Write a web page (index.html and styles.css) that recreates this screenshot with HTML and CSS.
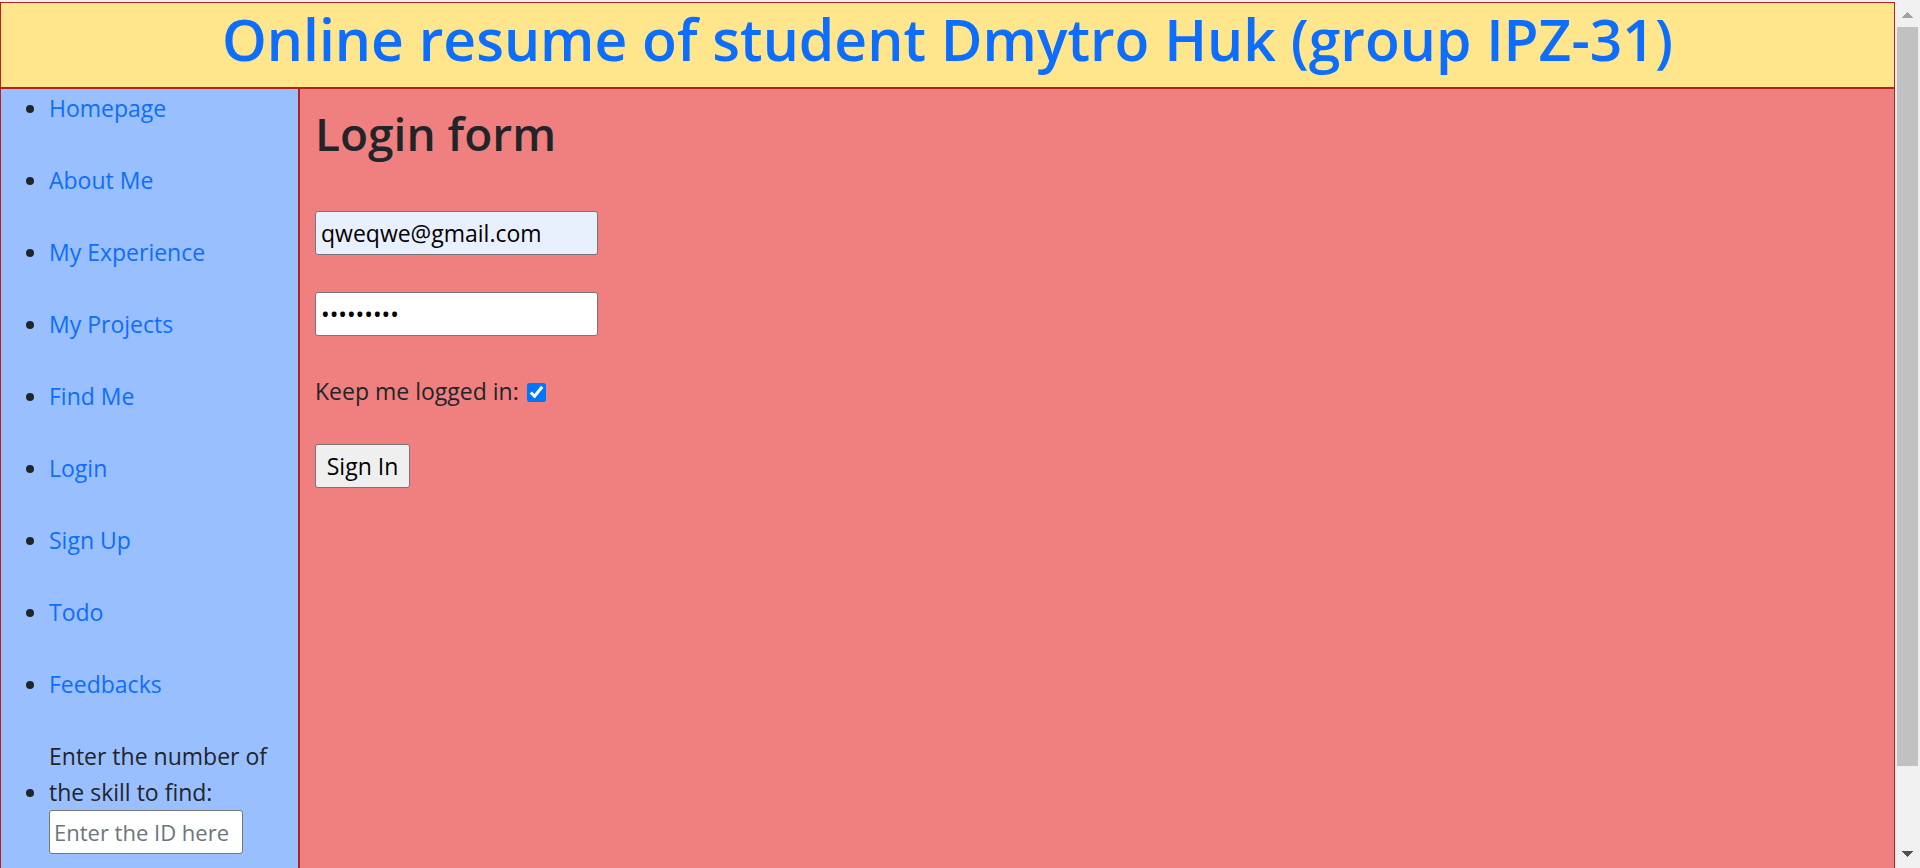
FILE: index.html
```html
<!DOCTYPE html>
<html lang="en">
<head>
<meta charset="utf-8">
<title>Online resume of student Dmytro Huk</title>
<link rel="stylesheet" href="styles.css">
</head>
<body>
<div class="page">
  <header class="site-header">
    <h1 class="site-title">Online resume of student Dmytro Huk (group IPZ-31)</h1>
  </header>
  <div class="layout">
    <nav class="sidebar">
      <ul class="nav-list">
        <li class="nav-item"><a class="nav-link" href="#">Homepage</a></li>
        <li class="nav-item"><a class="nav-link" href="#">About Me</a></li>
        <li class="nav-item"><a class="nav-link" href="#">My Experience</a></li>
        <li class="nav-item"><a class="nav-link" href="#">My Projects</a></li>
        <li class="nav-item"><a class="nav-link" href="#">Find Me</a></li>
        <li class="nav-item"><a class="nav-link" href="#">Login</a></li>
        <li class="nav-item"><a class="nav-link" href="#">Sign Up</a></li>
        <li class="nav-item"><a class="nav-link" href="#">Todo</a></li>
        <li class="nav-item"><a class="nav-link" href="#">Feedbacks</a></li>
        <li class="nav-item"><label class="search-label" for="skill">Enter the number of the skill to find:</label><input id="skill" class="search-input" type="text" placeholder="Enter the ID here"></li>
      </ul>
    </nav>
    <main class="content">
      <h2 class="form-title">Login form</h2>
      <form class="login-form">
        <input class="field field-filled" type="email" value="qweqwe@gmail.com">
        <input class="field" type="password" value="123456789">
        <label class="remember">Keep me logged in:<input class="remember-box" type="checkbox" checked></label>
        <button class="btn" type="button">Sign In</button>
      </form>
    </main>
  </div>
</div>
<div class="scrollbar" aria-hidden="true">
  <div class="sb-btn sb-up"></div>
  <div class="sb-track"><div class="sb-thumb"></div></div>
  <div class="sb-btn sb-down"></div>
</div>
</body>
</html>
```

FILE: styles.css
```css
html {
  background: #f0f0f0;
}

body {
  margin: 0;
  font-family: "Open Sans", "Noto Sans", "Liberation Sans", sans-serif;
  font-size: 23px;
  line-height: 36px;
  color: #212529;
}

.page {
  padding-top: 2px;
  margin-right: 25px;
}

.site-header {
  background: #ffe68c;
  border: 1px solid #b22222;
  border-bottom-width: 2px;
}

.site-title {
  margin: 0 0 12px;
  text-align: center;
  font-size: 57px;
  line-height: 72px;
  font-weight: 600;
  color: #0d6efd;
}

.layout {
  display: flex;
  min-height: 873px;
}

.sidebar {
  width: 297px;
  flex: none;
  background: #99bfff;
  border-left: 1px solid #b22222;
  border-right: 2px solid #b22222;
}

.nav-list {
  margin: 0;
  padding: 1px 0 0 48px;
}

.nav-item {
  margin-bottom: 36px;
}

.nav-link {
  color: #0d6efd;
  text-decoration: none;
}

.search-label {
  display: inline-block;
}

.search-input {
  display: block;
  box-sizing: border-box;
  width: 194px;
  height: 44px;
  margin: 0;
  padding: 0 4px;
  font: inherit;
  font-size: 22px;
  color: #212529;
  background: #fff;
  border: 1px solid #767676;
  border-radius: 3px;
}

.search-input::placeholder {
  color: #6c757d;
}

.content {
  flex: 1;
  background: #f08080;
  border-right: 1px solid #b22222;
  padding: 15px 15px 0;
}

.form-title {
  margin: 0 0 49px;
  font-size: 46px;
  line-height: 58px;
  font-weight: 600;
  color: #212529;
}

.login-form {
  display: flex;
  flex-direction: column;
  align-items: flex-start;
}

.field {
  box-sizing: border-box;
  width: 283px;
  height: 44px;
  margin: 0 0 37px;
  padding: 0 5px;
  font: inherit;
  color: #000;
  background: #fff;
  border: 1px solid #767676;
  border-radius: 3px;
}

.field-filled {
  background: #e8f0fe;
}

.remember {
  display: block;
  margin-bottom: 35px;
}

.remember-box {
  width: 19px;
  height: 19px;
  margin: 0 0 0 8px;
  vertical-align: -2px;
}

.btn {
  box-sizing: border-box;
  width: 95px;
  height: 44px;
  padding: 0;
  font: inherit;
  color: #000;
  background: #efefef;
  border: 1px solid #767676;
  border-radius: 3px;
}

/* window scrollbar, drawn over the right edge of the viewport */
.scrollbar {
  position: fixed;
  top: 0;
  right: 0;
  width: 25px;
  height: 100vh;
  display: flex;
  flex-direction: column;
  background: #f0f0f0;
}

.sb-btn {
  height: 27px;
  flex: none;
  background-repeat: no-repeat;
  background-size: 11px 6px;
}

.sb-up {
  background-image: conic-gradient(from 137.5deg at 50% 0, #a3a3a3 85deg, transparent 0);
  background-position: 7px 12px;
}

.sb-down {
  background-image: conic-gradient(from -42.5deg at 50% 100%, #505050 85deg, transparent 0);
  background-position: 7px 10px;
}

.sb-track {
  flex: 1;
  padding: 0 2px;
}

.sb-thumb {
  height: 739px;
  background: #c1c1c1;
}
```
